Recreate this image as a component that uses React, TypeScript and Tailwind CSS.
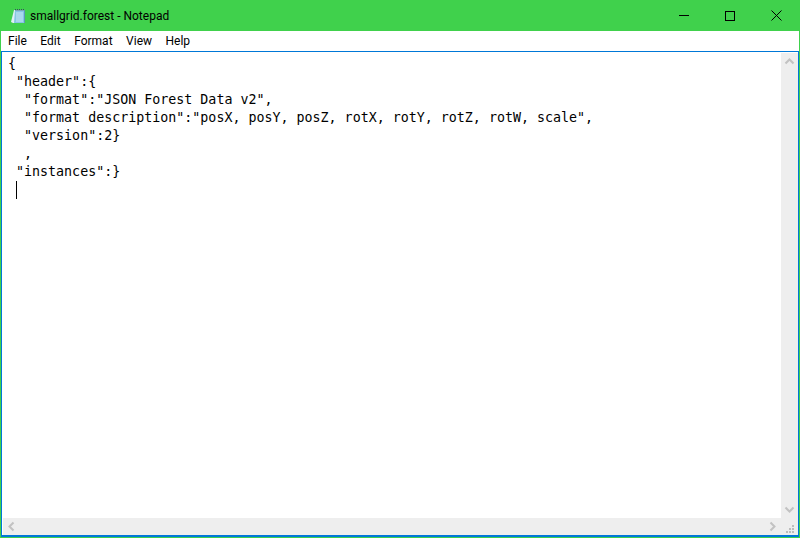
const lines = [
  "{",
  ' "header":{',
  '  "format":"JSON Forest Data v2",',
  '  "format description":"posX, posY, posZ, rotX, rotY, rotZ, rotW, scale",',
  '  "version":2}',
  "  ,",
  ' "instances":}',
];

function NotepadIcon() {
  return (
    <svg width="16" height="17" viewBox="0 0 16 17" className="shrink-0">
      <path d="M1 15L4 3h10v13H3z" fill="#dff1f6" />
      <path d="M5 3h9v13H4z" fill="#86c6e4" />
      <path d="M6 6h7M6 8h7M6 10h7M6 12h7M6 14h7" stroke="#cde9f4" />
      <path d="M5 3.500h9" stroke="#7fa4b8" />
      <path d="M5 2.500h9" stroke="#34505f" strokeDasharray="1 1" />
      <path d="M14.500 3v13" stroke="#5f97b4" />
    </svg>
  );
}

function Arrow({ d }: { d: string }) {
  return (
    <svg width="17" height="17" viewBox="0 0 17 17" className="shrink-0">
      <path d={d} fill="none" stroke="#c2c2c2" strokeWidth="2" />
    </svg>
  );
}

function Grip() {
  return (
    <svg width="17" height="17" viewBox="0 0 17 17" className="shrink-0">
      <path d="M11 7h2v2h-2zM8 10h2v2H8zM11 10h2v2h-2zM5 13h2v2H5zM8 13h2v2H8zM11 13h2v2h-2z" fill="#bcbcbc" />
    </svg>
  );
}

export default function App() {
  return (
    <div className="w-[800px] h-[538px] flex flex-col bg-[#40d14c] overflow-hidden font-['Roboto',sans-serif] text-black">
      {/* Title bar */}
      <div className="h-[31px] flex items-center pl-[10px] shrink-0">
        <NotepadIcon />
        <span className="ml-[4px] text-[12px]">smallgrid.forest - Notepad</span>
        <div className="ml-auto flex h-full pr-px">
          <div className="w-[46px] flex items-center justify-center">
            <svg width="10" height="1" viewBox="0 0 10 1">
              <path d="M0 .500h10" stroke="#000" />
            </svg>
          </div>
          <div className="w-[46px] flex items-center justify-center">
            <div className="w-[10px] h-[10px] border border-black" />
          </div>
          <div className="w-[46px] flex items-center justify-center">
            <svg width="11" height="11" viewBox="0 0 11 11">
              <path d="M.500.500l10 10M10.500.500l-10 10" stroke="#000" />
            </svg>
          </div>
        </div>
      </div>

      {/* Client area */}
      <div className="flex-1 flex flex-col mx-px mb-px bg-white min-h-0">
        <div className="h-[20px] flex items-center gap-[13.5px] px-[7px] text-[12px] bg-white shrink-0">
          <span>File</span>
          <span>Edit</span>
          <span>Format</span>
          <span>View</span>
          <span>Help</span>
        </div>
        <div className="flex-1 flex flex-col border border-[#0078d7] border-b-2 min-h-0 bg-white">
          <div className="flex-1 flex min-h-0 pt-px">
            <div className="flex-1 pl-[6px] pt-[2px] font-['DejaVu_Sans_Mono',monospace] text-[13.32px] leading-[18px] whitespace-pre">
              {lines.map((line, i) => (
                <div key={i} className="h-[18px]">{line}</div>
              ))}
              <div className="h-[18px] ml-[8px] w-px bg-black" />
            </div>
            <div className="w-[17px] bg-[#eeeeee] flex flex-col justify-between">
              <Arrow d="M4.500 10.500l4-4 4 4" />
              <Arrow d="M4.500 6.500l4 4 4-4" />
            </div>
          </div>
          <div className="h-[17px] ml-px bg-[#eeeeee] flex items-center justify-between shrink-0">
            <Arrow d="M10.500 4.500l-4 4 4 4" />
            <div className="flex">
              <Arrow d="M6.500 4.500l4 4-4 4" />
              <Grip />
            </div>
          </div>
        </div>
      </div>
    </div>
  );
}
